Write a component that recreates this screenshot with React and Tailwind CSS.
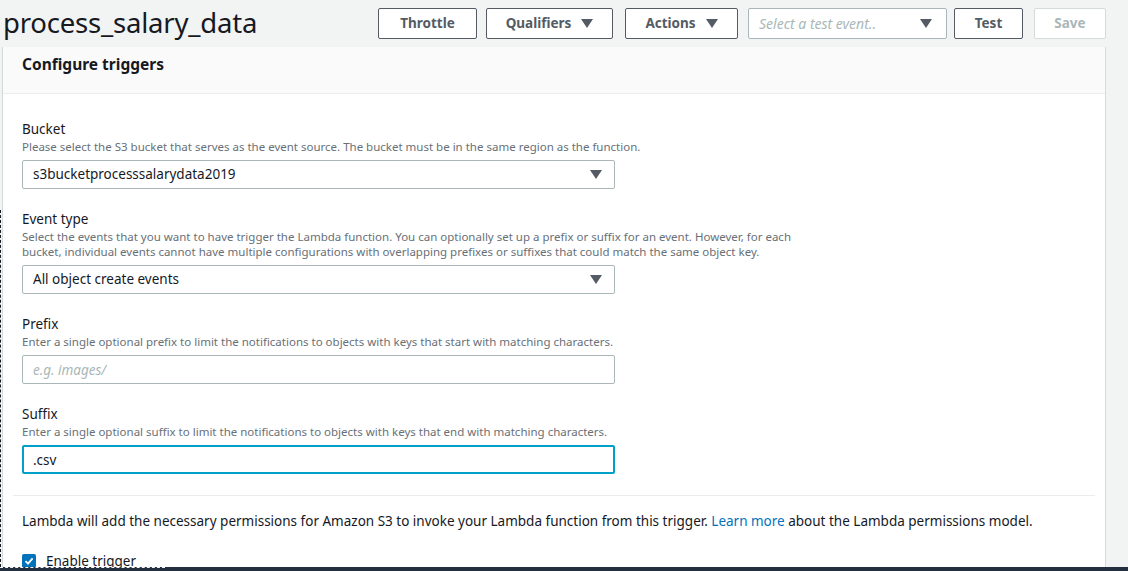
import React, { useState } from 'react';

const Caret = ({ className = '' }) => (
    <svg width="12" height="9" viewBox="0 0 12 9" className={className}>
        <path d="M0 0 H12 L6 9 Z" fill="currentColor" />
    </svg>
);

const Field = ({ label, desc, children }) => (
    <div className="flex flex-col">
        <label className="text-[13.5px] leading-[20px] text-[#16191f]">{label}</label>
        <p className="text-[11.5px] leading-[15px] text-[#687078] max-w-[790px]">{desc}</p>
        <div className="mt-[6px] w-[593px]">{children}</div>
    </div>
);

const SelectBox = ({ value }) => (
    <div className="h-[29px] flex items-center justify-between border border-[#aab7b8] rounded-[2px] bg-white pl-[10px] pr-[12px] text-[13.5px] text-[#16191f]">
        <span>{value}</span>
        <Caret className="text-[#545b64]" />
    </div>
);

const App = () => {
    const [suffix, setSuffix] = useState('.csv');
    const [enabled, setEnabled] = useState(true);

    return (
        <div className="h-[571px] w-[1128px] overflow-hidden bg-[#f2f3f3] flex flex-col font-['Noto_Sans',sans-serif] text-[#16191f]">
            <div className="h-[47px] shrink-0 flex items-center pl-[3px]">
                <h1 className="text-[27.5px] leading-[32px] font-normal tracking-[-0.2px] text-[#16191f] mb-[2px]">process_salary_data</h1>
                <div className="ml-auto mr-[22px] flex items-center text-[13.5px] font-bold text-[#545b64]">
                    <button className="h-[31px] w-[99px] border border-[#545b64] rounded-[2px] bg-white">Throttle</button>
                    <button className="ml-[9px] h-[31px] w-[127px] border border-[#545b64] rounded-[2px] bg-white flex items-center justify-center gap-[10px]">
                        Qualifiers <Caret />
                    </button>
                    <button className="ml-[12px] h-[31px] w-[113px] border border-[#545b64] rounded-[2px] bg-white flex items-center justify-center gap-[10px]">
                        Actions <Caret />
                    </button>
                    <div className="ml-[10px] h-[31px] w-[199px] border border-[#aab7b8] rounded-[2px] bg-white flex items-center justify-between pl-[10px] pr-[14px] font-normal italic text-[14px] text-[#aab7b8]">
                        <span>Select a test event..</span>
                        <Caret className="text-[#545b64]" />
                    </div>
                    <button className="ml-[7px] h-[31px] w-[69px] border border-[#545b64] rounded-[2px] bg-white">Test</button>
                    <button className="ml-[11px] h-[31px] w-[72px] border border-[#d5dbdb] rounded-[2px] bg-white text-[#aab7b8]">Save</button>
                </div>
            </div>

            <div className="flex-1 flex min-h-0 relative">
                <div className="absolute left-0 top-[163px] bottom-0 border-l border-dashed border-[#16191f]" />
                <div className="ml-[2px] w-[1104px] border-l border-r border-[#d5dbdb] bg-white flex flex-col">
                    <div className="h-[47px] shrink-0 bg-[#fafafa] border-b border-[#eaeded] flex items-start pt-[5px] pl-[19px]">
                        <h2 className="text-[15.5px] leading-[24px] font-bold text-[#16191f]">Configure triggers</h2>
                    </div>
                    <div className="flex flex-col gap-[20px] pl-[19px] pt-[25px]">
                        <Field
                            label="Bucket"
                            desc="Please select the S3 bucket that serves as the event source. The bucket must be in the same region as the function."
                        >
                            <SelectBox value="s3bucketprocesssalarydata2019" />
                        </Field>
                        <Field
                            label="Event type"
                            desc="Select the events that you want to have trigger the Lambda function. You can optionally set up a prefix or suffix for an event. However, for each bucket, individual events cannot have multiple configurations with overlapping prefixes or suffixes that could match the same object key."
                        >
                            <SelectBox value="All object create events" />
                        </Field>
                        <Field
                            label="Prefix"
                            desc="Enter a single optional prefix to limit the notifications to objects with keys that start with matching characters."
                        >
                            <input
                                placeholder="e.g. images/"
                                className="h-[29px] w-full border border-[#aab7b8] rounded-[2px] px-[10px] text-[13.5px] placeholder:italic placeholder:text-[#aab7b8] outline-none"
                            />
                        </Field>
                        <Field
                            label="Suffix"
                            desc="Enter a single optional suffix to limit the notifications to objects with keys that end with matching characters."
                        >
                            <input
                                value={suffix}
                                onChange={(e) => setSuffix(e.target.value)}
                                className="h-[29px] w-full border-2 border-[#00a1c9] rounded-[2px] px-[9px] text-[13.5px] text-[#16191f] outline-none"
                            />
                        </Field>
                    </div>
                    <div className="mt-[21px] ml-[10px] mr-[10px] border-t border-[#eaeded]" />
                    <p className="pl-[19px] mt-[16px] text-[13.5px] leading-[18px] text-[#16191f]">
                        Lambda will add the necessary permissions for Amazon S3 to invoke your Lambda function from this trigger.{' '}
                        <a href="#" className="text-[#0073bb]">Learn more</a> about the Lambda permissions model.
                    </p>
                    <label className="pl-[19px] mt-[21px] flex items-center gap-[10px] text-[13.5px] text-[#16191f]">
                        <span
                            onClick={() => setEnabled(!enabled)}
                            className="w-[14px] h-[14px] rounded-[2px] bg-[#0073bb] flex items-center justify-center"
                        >
                            {enabled && (
                                <svg width="10" height="10" viewBox="0 0 10 10">
                                    <path d="M1.5 5.2 L4 7.6 L8.6 2.4" stroke="white" strokeWidth="1.8" fill="none" />
                                </svg>
                            )}
                        </span>
                        Enable trigger
                    </label>
                </div>
            </div>

            <div className="h-[4px] shrink-0 bg-[#232f3e] relative">
                <div className="absolute left-0 top-0 w-[165px] border-t border-dashed border-[#f2f3f3]" />
            </div>
        </div>
    );
};

export default App;
